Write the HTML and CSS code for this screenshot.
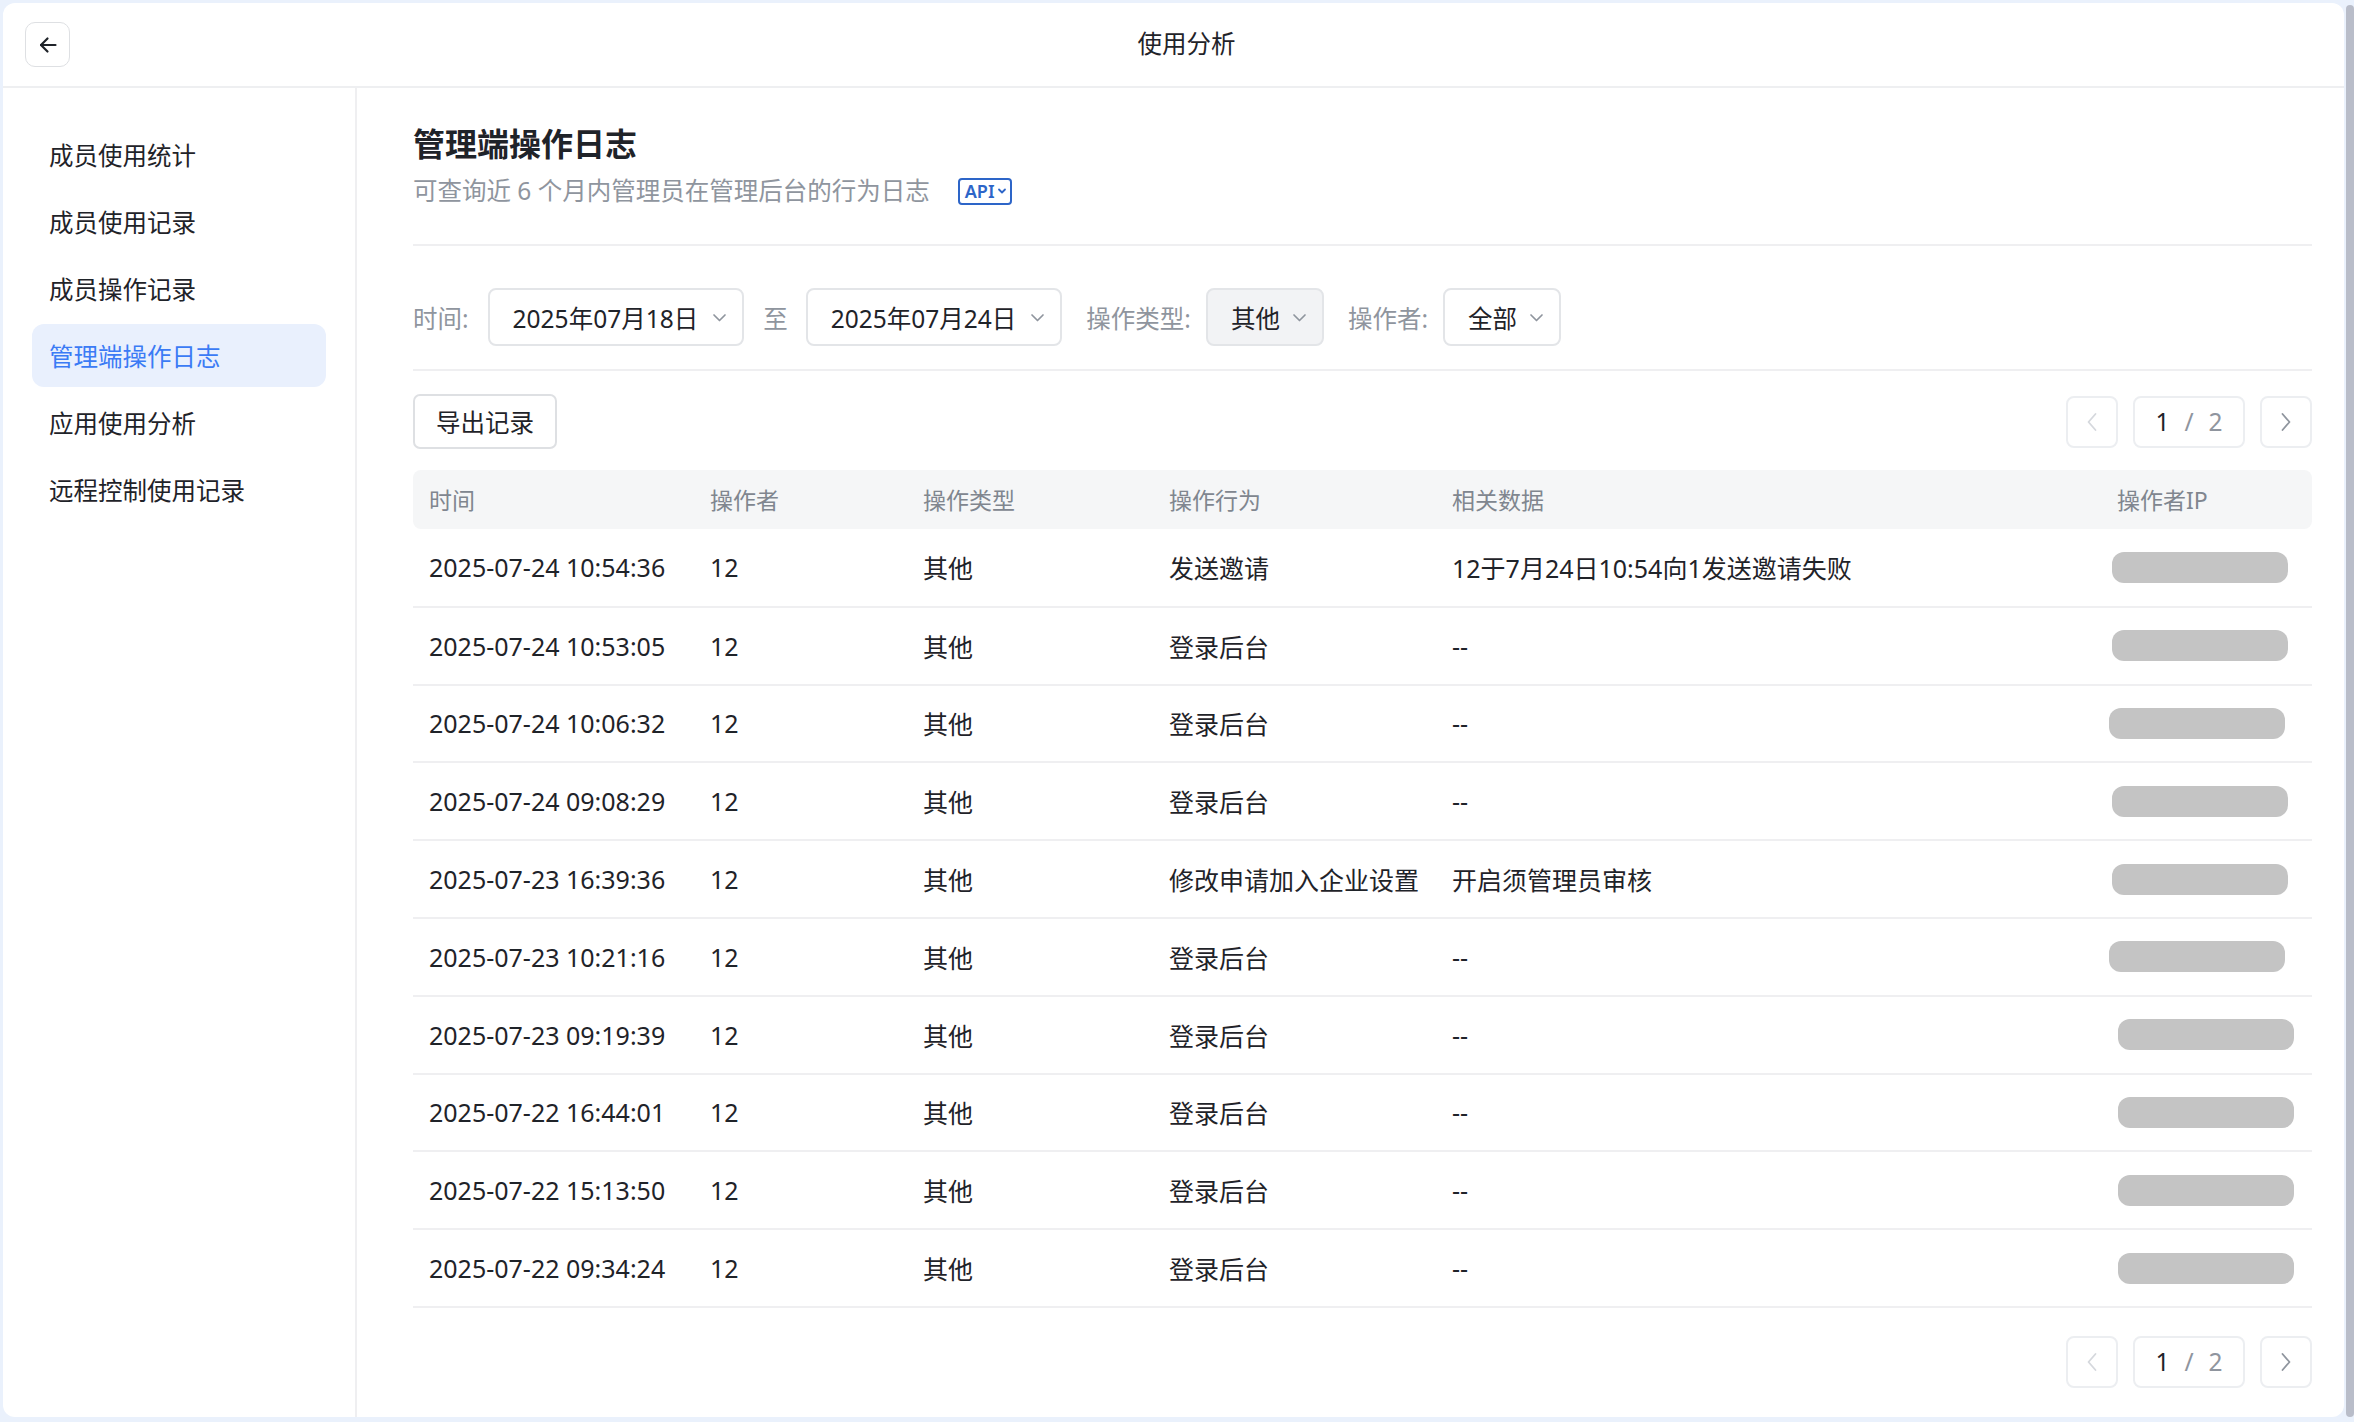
FILE: index.html
```html
<!DOCTYPE html>
<html lang="zh-CN">
<head>
    <meta charset="UTF-8">
    <title>使用分析</title>
    <link rel="stylesheet" href="styles.css">
</head>
<body>

    <div class="window">
        <!-- Top bar -->
        <div class="topbar">
            <button class="back-btn">
                <svg width="24" height="24" viewBox="0 0 24 24" fill="none" stroke="#1f2329" stroke-width="2.2" stroke-linecap="round" stroke-linejoin="round">
                    <path d="M19.5 12H5"/>
                    <path d="M11.5 5.5L5 12l6.5 6.5"/>
                </svg>
            </button>
            <div class="topbar-title">使用分析</div>
            <div></div>
        </div>

        <div class="main">
            <!-- Sidebar -->
            <ul class="sidebar">
                <li class="nav-item">成员使用统计</li>
                <li class="nav-item">成员使用记录</li>
                <li class="nav-item">成员操作记录</li>
                <li class="nav-item active">管理端操作日志</li>
                <li class="nav-item">应用使用分析</li>
                <li class="nav-item">远程控制使用记录</li>
            </ul>

            <!-- Content -->
            <div class="content">
                <div class="page-head">
                    <h1>管理端操作日志</h1>
                    <p class="subtitle">
                        可查询近 6 个月内管理员在管理后台的行为日志
                        <span class="api-tag">API<svg width="10" height="8" viewBox="0 0 10 8" fill="none" stroke="#2d65c8" stroke-width="1.8" stroke-linecap="round" stroke-linejoin="round"><path d="M2 2.5l3 3 3-3"/></svg></span>
                    </p>
                </div>

                <div class="filters">
                    <span class="filter-label first">时间:</span>
                    <div class="select">2025年07月18日<svg class="chev" width="15" height="9" viewBox="0 0 15 9" fill="none" stroke="#8f959e" stroke-width="1.7" stroke-linecap="round" stroke-linejoin="round"><path d="M2 2l5.5 5.5L13 2"/></svg></div>
                    <span class="filter-label to">至</span>
                    <div class="select">2025年07月24日<svg class="chev" width="15" height="9" viewBox="0 0 15 9" fill="none" stroke="#8f959e" stroke-width="1.7" stroke-linecap="round" stroke-linejoin="round"><path d="M2 2l5.5 5.5L13 2"/></svg></div>
                    <span class="filter-label group">操作类型:</span>
                    <div class="select small selected">其他<svg class="chev" width="15" height="9" viewBox="0 0 15 9" fill="none" stroke="#8f959e" stroke-width="1.7" stroke-linecap="round" stroke-linejoin="round"><path d="M2 2l5.5 5.5L13 2"/></svg></div>
                    <span class="filter-label group">操作者:</span>
                    <div class="select small">全部<svg class="chev" width="15" height="9" viewBox="0 0 15 9" fill="none" stroke="#8f959e" stroke-width="1.7" stroke-linecap="round" stroke-linejoin="round"><path d="M2 2l5.5 5.5L13 2"/></svg></div>
                </div>

                <div class="toolbar">
                    <button class="export-btn">导出记录</button>
                    <div class="pager">
                        <span class="pg-btn">
                            <svg width="12" height="20" viewBox="0 0 12 20" fill="none" stroke="#d5d8dd" stroke-width="1.8" stroke-linecap="round" stroke-linejoin="round"><path d="M9.5 2L2.5 10l7 8"/></svg>
                        </span>
                        <span class="pg-num"><b>1</b><span>/</span><span>2</span></span>
                        <span class="pg-btn">
                            <svg width="12" height="20" viewBox="0 0 12 20" fill="none" stroke="#8f959e" stroke-width="1.8" stroke-linecap="round" stroke-linejoin="round"><path d="M2.5 2l7 8-7 8"/></svg>
                        </span>
                    </div>
                </div>

                <table class="log-table">
                    <colgroup>
                        <col style="width: 281px">
                        <col style="width: 213px">
                        <col style="width: 246px">
                        <col style="width: 283px">
                        <col style="width: 665px">
                        <col style="width: 211px">
                    </colgroup>
                    <thead>
                        <tr>
                            <th>时间</th>
                            <th>操作者</th>
                            <th>操作类型</th>
                            <th>操作行为</th>
                            <th>相关数据</th>
                            <th>操作者IP</th>
                        </tr>
                    </thead>
                    <tbody>
                        <tr>
                            <td>2025-07-24 10:54:36</td><td>12</td><td>其他</td><td>发送邀请</td>
                            <td>12于7月24日10:54向1发送邀请失败</td><td><span class="ip ip-l"></span></td>
                        </tr>
                        <tr>
                            <td>2025-07-24 10:53:05</td><td>12</td><td>其他</td><td>登录后台</td>
                            <td>--</td><td><span class="ip ip-l"></span></td>
                        </tr>
                        <tr>
                            <td>2025-07-24 10:06:32</td><td>12</td><td>其他</td><td>登录后台</td>
                            <td>--</td><td><span class="ip ip-xl"></span></td>
                        </tr>
                        <tr>
                            <td>2025-07-24 09:08:29</td><td>12</td><td>其他</td><td>登录后台</td>
                            <td>--</td><td><span class="ip"></span></td>
                        </tr>
                        <tr>
                            <td>2025-07-23 16:39:36</td><td>12</td><td>其他</td><td>修改申请加入企业设置</td>
                            <td>开启须管理员审核</td><td><span class="ip"></span></td>
                        </tr>
                        <tr>
                            <td>2025-07-23 10:21:16</td><td>12</td><td>其他</td><td>登录后台</td>
                            <td>--</td><td><span class="ip ip-xl"></span></td>
                        </tr>
                        <tr>
                            <td>2025-07-23 09:19:39</td><td>12</td><td>其他</td><td>登录后台</td>
                            <td>--</td><td><span class="ip ip-r"></span></td>
                        </tr>
                        <tr>
                            <td>2025-07-22 16:44:01</td><td>12</td><td>其他</td><td>登录后台</td>
                            <td>--</td><td><span class="ip ip-r"></span></td>
                        </tr>
                        <tr>
                            <td>2025-07-22 15:13:50</td><td>12</td><td>其他</td><td>登录后台</td>
                            <td>--</td><td><span class="ip ip-r"></span></td>
                        </tr>
                        <tr>
                            <td>2025-07-22 09:34:24</td><td>12</td><td>其他</td><td>登录后台</td>
                            <td>--</td><td><span class="ip ip-r"></span></td>
                        </tr>
                    </tbody>
                </table>

                <div class="pager bottom">
                    <span class="pg-btn">
                        <svg width="12" height="20" viewBox="0 0 12 20" fill="none" stroke="#d5d8dd" stroke-width="1.8" stroke-linecap="round" stroke-linejoin="round"><path d="M9.5 2L2.5 10l7 8"/></svg>
                    </span>
                    <span class="pg-num"><b>1</b><span>/</span><span>2</span></span>
                    <span class="pg-btn">
                        <svg width="12" height="20" viewBox="0 0 12 20" fill="none" stroke="#8f959e" stroke-width="1.8" stroke-linecap="round" stroke-linejoin="round"><path d="M2.5 2l7 8-7 8"/></svg>
                    </span>
                </div>
            </div>
        </div>
    </div>
    <div class="edge"></div>

</body>
</html>
```

FILE: styles.css
```css
* {
    box-sizing: border-box;
}

body {
    margin: 0;
    height: 100vh;
    display: flex;
    background-color: #eaf1fc;
    font-family: "Noto Sans", "Noto Sans CJK SC", sans-serif;
    font-size: 24.5px;
    color: #1f2329;
    overflow: hidden;
}

.window {
    flex: 1;
    margin: 3px 2px 5px 3px;
    background-color: #fff;
    border-radius: 12px;
    display: flex;
    flex-direction: column;
    overflow: hidden;
}

/* strip along the right side of the window */
.edge {
    width: 8px;
    margin: 5px 0;
    background-color: #b9bdc9;
    border-radius: 4px;
}

/* ---------- top bar ---------- */
.topbar {
    height: 85px;
    flex-shrink: 0;
    display: grid;
    grid-template-columns: 1fr auto 1fr;
    align-items: center;
    padding: 0 22px;
    border-bottom: 2px solid #eeeff1;
}

.back-btn {
    width: 45px;
    height: 45px;
    display: flex;
    align-items: center;
    justify-content: center;
    background: #fff;
    border: 1.5px solid #dee0e3;
    border-radius: 10px;
    padding: 0;
}

.topbar-title {
    margin-left: 26px;
    line-height: 1;
}

/* ---------- layout ---------- */
.main {
    flex: 1;
    display: flex;
}

.sidebar {
    width: 354px;
    flex-shrink: 0;
    list-style: none;
    margin: 0;
    padding: 35px 0 0 29px;
    border-right: 2px solid #efeff1;
}

.nav-item {
    width: 294px;
    height: 63px;
    margin-bottom: 4px;
    padding-left: 17px;
    display: flex;
    align-items: center;
    border-radius: 12px;
}

.nav-item.active {
    background-color: #e9f0fd;
    color: #3b7bf5;
}

.content {
    flex: 1;
    padding: 0 32px 0 56px;
}

/* ---------- page head ---------- */
.page-head {
    padding: 34px 0 36px;
    border-bottom: 2px solid #efeff1;
}

.page-head h1 {
    margin: 0;
    font-size: 32px;
    line-height: 44px;
    font-weight: 700;
}

.subtitle {
    margin: 8px 0 0;
    line-height: 34px;
    color: #8f959e;
    display: flex;
    align-items: center;
}

.api-tag {
    margin-left: 28px;
    height: 27px;
    padding: 0 3px 0 5px;
    display: inline-flex;
    align-items: center;
    gap: 2px;
    border: 2px solid #2d65c8;
    border-radius: 4px;
    color: #2d65c8;
    font-size: 18px;
    font-weight: 600;
}

/* ---------- filters ---------- */
.filters {
    display: flex;
    align-items: center;
    padding: 42px 0 23px;
    border-bottom: 2px solid #efeff1;
}

.filter-label {
    color: #8f959e;
    margin-right: 15px;
    white-space: nowrap;
}

.filter-label.first {
    margin-right: 19px;
}

.filter-label.to {
    margin-left: 19px;
    margin-right: 18px;
}

.filter-label.group {
    margin-left: 24px;
}

.select {
    height: 58px;
    display: flex;
    align-items: center;
    gap: 14px;
    padding: 0 15px 0 23px;
    border: 2px solid #e3e5e8;
    border-radius: 8px;
    background: #fff;
    white-space: nowrap;
}

.select.small {
    gap: 12px;
    padding: 0 15px 0 23px;
}

.select.selected {
    background-color: #f2f3f5;
}

/* ---------- toolbar ---------- */
.toolbar {
    margin-top: 23px;
    display: flex;
    justify-content: space-between;
    align-items: center;
}

.export-btn {
    height: 55px;
    padding: 0 21px;
    font: inherit;
    color: #1f2329;
    background: #fff;
    border: 2px solid #dee0e3;
    border-radius: 7px;
}

.pager {
    display: flex;
    gap: 15px;
}

.pager.bottom {
    justify-content: flex-end;
    margin-top: 28px;
}

.pg-btn,
.pg-num {
    height: 52px;
    display: flex;
    align-items: center;
    justify-content: center;
    border: 2px solid #eceef1;
    border-radius: 8px;
}

.pg-btn {
    width: 52px;
}

.pg-num {
    width: 112px;
    gap: 15px;
    color: #8f959e;
}

.pg-num b {
    font-weight: 400;
    color: #1f2329;
}

/* ---------- table ---------- */
.log-table {
    width: 100%;
    margin-top: 21px;
    table-layout: fixed;
    border-collapse: collapse;
}

.log-table th {
    height: 59px;
    padding: 0 16px 2px;
    text-align: left;
    font-weight: 400;
    font-size: 23px;
    color: #80868f;
    background-color: #f5f6f7;
}

.log-table th:first-child {
    border-radius: 8px 0 0 8px;
}

.log-table th:last-child {
    border-radius: 0 8px 8px 0;
}

.log-table td {
    height: 77.8px;
    padding: 0 16px;
    font-size: 25px;
    border-bottom: 2px solid #efeff1;
    white-space: nowrap;
}

.ip {
    display: block;
    width: 176px;
    height: 31px;
    border-radius: 12px;
    background-color: #c4c4c4;
    margin-left: -5px;
}

.ip-l {
    margin-left: -5px;
}

.ip-xl {
    margin-left: -8px;
}

.ip-r {
    margin-left: 1px;
}
```
